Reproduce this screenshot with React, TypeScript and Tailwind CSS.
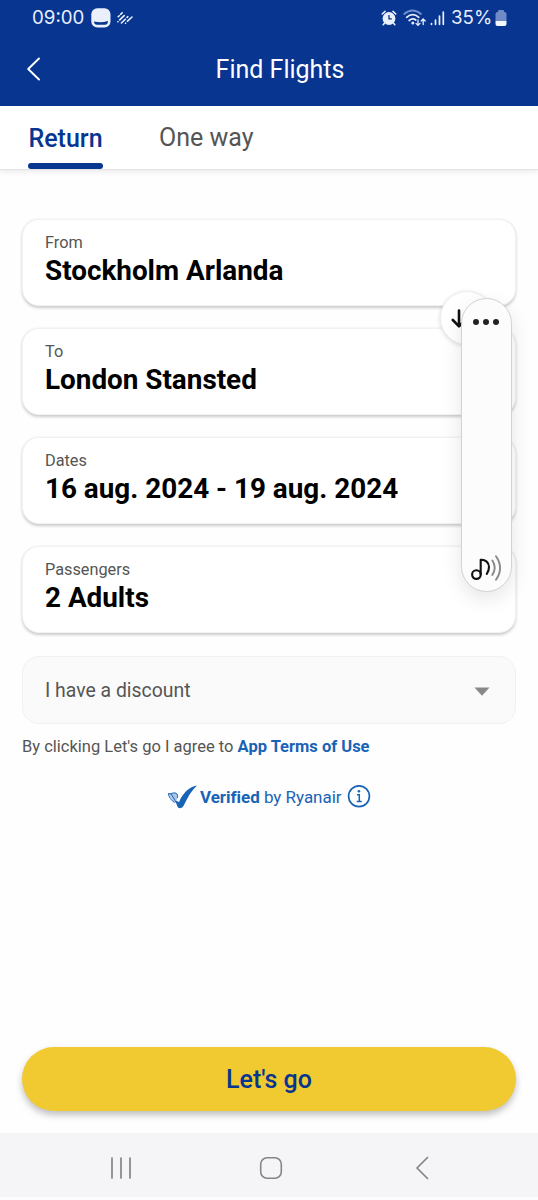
import React from 'react';

interface FieldCardProps {
  label: string;
  value: string;
}

const FieldCard: React.FC<FieldCardProps> = ({ label, value }) => (
  <button className="w-full h-[87px] px-[22px] pt-[13px] flex flex-col items-start justify-start text-left bg-white rounded-[17px] border border-[#f2f2f2] shadow-[0_1.5px_3px_rgba(0,0,0,0.2)]">
    <span className="text-[16.3px] leading-5 text-[#555]">{label}</span>
    <span className="mt-[2px] text-[27.85px] leading-8 font-bold text-black whitespace-nowrap">{value}</span>
  </button>
);

const StatusBar = () => (
  <div className="h-9 pl-8 pr-[31px] flex items-center justify-between text-[#e9effb] font-['Inter',sans-serif]">
    <div className="flex items-center">
      <span className="w-[53px] text-[18.7px] leading-9 whitespace-nowrap">09:00</span>
      <svg width="20" height="20" viewBox="0 0 20 20" className="ml-[6px]">
        <rect x="0.3" y="0.3" width="19.2" height="19.2" rx="6" fill="#e9effb" />
        <path d="M3 13.6 Q10 15.3 17 13 Q17 16.7 14 16.7 H6 Q3 16.7 3 13.6Z" fill="#073590" />
      </svg>
      <svg width="16" height="14" viewBox="0 0 16 14" className="ml-[6px]" stroke="#e9effb" strokeWidth="1.6" strokeLinecap="round">
        <path d="M1.2 5.8 L2.2 4.8 M3.6 3.4 L5.2 1.8 M0.9 10.8 L1 10.7 M2.7 8.9 L7.2 4.6 M4.4 12 L8.3 8.2 M10.1 6.4 L10.8 5.7 M8.5 12.3 L8.6 12.2 M10.5 10.2 L15 6" />
      </svg>
    </div>
    <div className="flex items-center">
      <svg width="16" height="16" viewBox="0 0 16 16" fill="none">
        <circle cx="8" cy="8.5" r="6.4" fill="#e9effb" />
        <path d="M1.2 4 L4 1.4 M14.8 4 L12 1.4 M3.6 13 L2.2 14.7 M12.4 13 L13.8 14.7" stroke="#e9effb" strokeWidth="1.6" strokeLinecap="round" />
        <path d="M8 5 V8.8 H10.8" stroke="#073590" strokeWidth="1.3" />
      </svg>
      <svg width="24" height="18" viewBox="0 0 24 18" fill="none" strokeLinecap="round" className="ml-[6px]">
        <path d="M1.2 5 Q9.5 -2 18 5" stroke="#6f8fce" strokeWidth="1.8" />
        <path d="M3.6 8.3 Q9.7 3 15.8 8.3 M6.2 11.5 Q9.7 8.7 12.8 11" stroke="#e9effb" strokeWidth="1.7" />
        <circle cx="9.8" cy="14" r="1.5" fill="#e9effb" />
        <path d="M15 11 V16.2 M13 14.4 L15 16.4 L17 14.4 M20.2 15.5 V10.2 M18.2 12 L20.2 10 L22.2 12" stroke="#e9effb" strokeWidth="1.3" />
      </svg>
      <svg width="15" height="16" viewBox="0 0 15 16" stroke="#e9effb" strokeWidth="1.7" strokeLinecap="round" className="ml-[3px]">
        <path d="M1.5 13.5 V14.3 M5.5 10 V14.3 M9.5 6 V14.3 M13.3 2 V14.3" />
      </svg>
      <span className="ml-[6px] w-[41px] text-[18.7px] leading-9 whitespace-nowrap">35%</span>
      <svg width="12" height="16" viewBox="0 0 12 16" className="ml-[3px]">
        <path d="M3 1.2 Q3 0 4 0 H8 Q9 0 9 1.2 V2 H9.5 Q11.5 2 11.5 4 V11 H0.5 V4 Q0.5 2 2.5 2 H3Z" fill="#6f8ac6" />
        <path d="M0.5 11 H11.5 V14 Q11.5 16 9.5 16 H2.5 Q0.5 16 0.5 14Z" fill="#f2f6ff" />
      </svg>
    </div>
  </div>
);

const Header = () => (
  <header className="h-[106px] bg-[#073590]">
    <StatusBar />
    <div className="h-[66px] px-[22px] grid grid-cols-[40px_1fr_40px] items-center">
      <button aria-label="Back">
        <svg width="24" height="26" viewBox="0 0 24 26" fill="none" stroke="#fff" strokeWidth="1.9" strokeLinecap="round" strokeLinejoin="round">
          <path d="M17 2.5 L6.2 13 L17 23.5" />
        </svg>
      </button>
      <h1 className="pt-[2px] pl-[22px] text-center text-[25px] leading-8 text-white whitespace-nowrap">Find Flights</h1>
    </div>
  </header>
);

const Tabs = () => (
  <nav className="h-16 pl-7 flex gap-[56px] bg-white border-b border-[#e4e4e4] shadow-[0_2px_5px_rgba(0,0,0,0.08)] text-[25px] leading-8">
    <button className="w-[75px] pt-[17px] flex flex-col items-center justify-between font-medium text-[#073590]">
      <span>Return</span>
      <span className="w-full h-[6px] rounded-full bg-[#073590]" />
    </button>
    <button className="pt-4 self-start text-[#555]">One way</button>
  </nav>
);

const VolumePanel = () => (
  <div className="absolute left-[461px] top-[298px] w-[51px] h-[294px] pt-[20px] pb-[9px] flex flex-col items-center justify-between rounded-full bg-[#fcfcfc] border border-[#d2d2d2] shadow-[0_7px_20px_rgba(0,0,0,0.1)]">
    <div className="flex gap-[4px] -ml-px">
      <span className="size-[6px] rounded-full bg-[#222]" />
      <span className="size-[6px] rounded-full bg-[#222]" />
      <span className="size-[6px] rounded-full bg-[#222]" />
    </div>
    <svg width="32" height="27" viewBox="0 0 32 27" fill="none" strokeLinecap="round" strokeLinejoin="round">
      <circle cx="5.4" cy="19.6" r="4.3" stroke="#111" strokeWidth="2.1" />
      <path d="M9.7 19.6 V4.8 C14.5 4.4 18 7.6 18 12 C18 14.5 17.2 16.7 15.8 18.8" stroke="#111" strokeWidth="2.1" />
      <path d="M21.4 5.5 C24.6 10.5 24.6 15 21.3 20" stroke="#888" strokeWidth="1.9" />
      <path d="M25 1.2 C30.4 9 30.4 17 25 24.8" stroke="#888" strokeWidth="1.9" />
    </svg>
  </div>
);

const VerifiedBadge = () => (
  <div className="mt-[27px] h-[26px] flex items-center pl-[145px] text-[17px] leading-[26px] text-[#1963b6] whitespace-nowrap">
    <svg width="31" height="24" viewBox="0 0 31 24">
      <path d="M1.3 8.6 C3.8 9.4 6 7.2 8.8 8.1 C10.6 9 11 10.8 10.4 13 L8.6 17.5 L6.4 16.5Z" fill="#a8c6e8" />
      <path d="M1.3 8.6 C3.8 9.4 6 7.2 8.8 8.1 C10.6 9 10.9 10.8 10.4 13 M1.3 8.6 C2 12 4 15.2 7.5 17.5 M4 9 L8.2 15.5" fill="none" stroke="#1963b6" strokeWidth="1" />
      <path d="M7.2 15.6 C9 15.8 10.8 16.2 12 17.2 C15.4 9 21.5 2.2 30 0.6 C24.2 5.8 20.8 12.5 17 20 C15 23.9 11.6 24 10.4 21.6 C9.8 19.4 8.8 17.2 7.2 15.6Z" fill="#1963b6" />
    </svg>
    <span className="ml-[2px] tracking-[-0.03px]"><b>Verified</b> by Ryanair</span>
    <svg width="24" height="24" viewBox="0 0 24 24" fill="none" stroke="#1963b6" strokeWidth="1.7" className="ml-[5px]">
      <circle cx="12" cy="11.2" r="10.4" />
      <path d="M10 9.8 H12.3 V16 M9.7 16.4 H14.8" strokeWidth="1.5" />
      <circle cx="11.9" cy="6.2" r="1.3" fill="#1963b6" stroke="none" />
    </svg>
  </div>
);

const SystemNav = () => (
  <div className="h-16 shrink-0 flex items-center justify-between pl-[109px] pr-[108px] pt-[5px] bg-[#f5f5f8]">
    <svg width="24" height="24" viewBox="0 0 24 24" stroke="#858589" strokeWidth="1.7" strokeLinecap="round">
      <path d="M3 2 V22 M12 2 V22 M21 2 V22" />
    </svg>
    <svg width="24" height="24" viewBox="0 0 24 24" fill="none" stroke="#858589" strokeWidth="1.6" className="mr-[5px]">
      <rect x="1.7" y="1.7" width="20.6" height="20.6" rx="6.5" />
    </svg>
    <svg width="16" height="24" viewBox="0 0 16 24" fill="none" stroke="#858589" strokeWidth="1.7" strokeLinecap="round" strokeLinejoin="round">
      <path d="M13.5 1.5 L3 12 L13.5 22.5" />
    </svg>
  </div>
);

const App: React.FC = () => (
  <div className="relative w-full h-[1200px] overflow-hidden flex flex-col bg-[#fefefe] font-['Roboto',sans-serif]">
    <Header />
    <Tabs />

    <main className="flex-1 flex flex-col px-[22px] pt-[49px]">
      <div className="flex flex-col gap-[22px]">
        <div className="relative flex flex-col gap-[22px]">
          <FieldCard label="From" value="Stockholm Arlanda" />
          <FieldCard label="To" value="London Stansted" />
          {/* Swap button sits on the seam between the two airports */}
          <button
            aria-label="Swap airports"
            className="absolute left-[418px] top-[72px] size-[54px] flex items-center pl-[9px] rounded-full bg-white border border-[#eee] shadow-[0_1px_4px_rgba(0,0,0,0.15)]"
          >
            <svg width="16" height="20" viewBox="0 0 16 20" fill="none" stroke="#111" strokeWidth="2.6" strokeLinecap="round" strokeLinejoin="round">
              <path d="M9 2.5 V18 M2.8 12 L9 18.3 L15.2 12" />
            </svg>
          </button>
        </div>
        <FieldCard label="Dates" value="16 aug. 2024 - 19 aug. 2024" />
        <FieldCard label="Passengers" value="2 Adults" />
        <button className="mt-px w-full h-[68px] pl-[22px] pr-[25px] flex items-center justify-between rounded-[17px] bg-[#fafafa] border border-[#f1f1f1] text-[19.4px] text-[#555]">
          <span className="pt-[2px]">I have a discount</span>
          <svg width="16" height="9" viewBox="0 0 16 9" fill="#888" className="mt-[3px]">
            <path d="M0.5 0.5 H15.5 L8 8.8Z" />
          </svg>
        </button>
      </div>

      <p className="mt-[13px] text-[16.5px] leading-5 text-[#555] whitespace-nowrap">
        By clicking Let's go I agree to <a className="font-bold text-[#1963b6]">App Terms of Use</a>
      </p>
      <VerifiedBadge />

      <button className="mt-auto mb-[22px] w-full h-[64px] pt-px shrink-0 rounded-full bg-[#f1c931] text-[25px] font-medium text-[#073590] shadow-[0_4px_7px_rgba(0,0,0,0.25)]">
        Let's go
      </button>
    </main>

    <SystemNav />
    <div className="h-[3px] shrink-0 bg-[#fdfdfd]" />
    <VolumePanel />
  </div>
);

export default App;
